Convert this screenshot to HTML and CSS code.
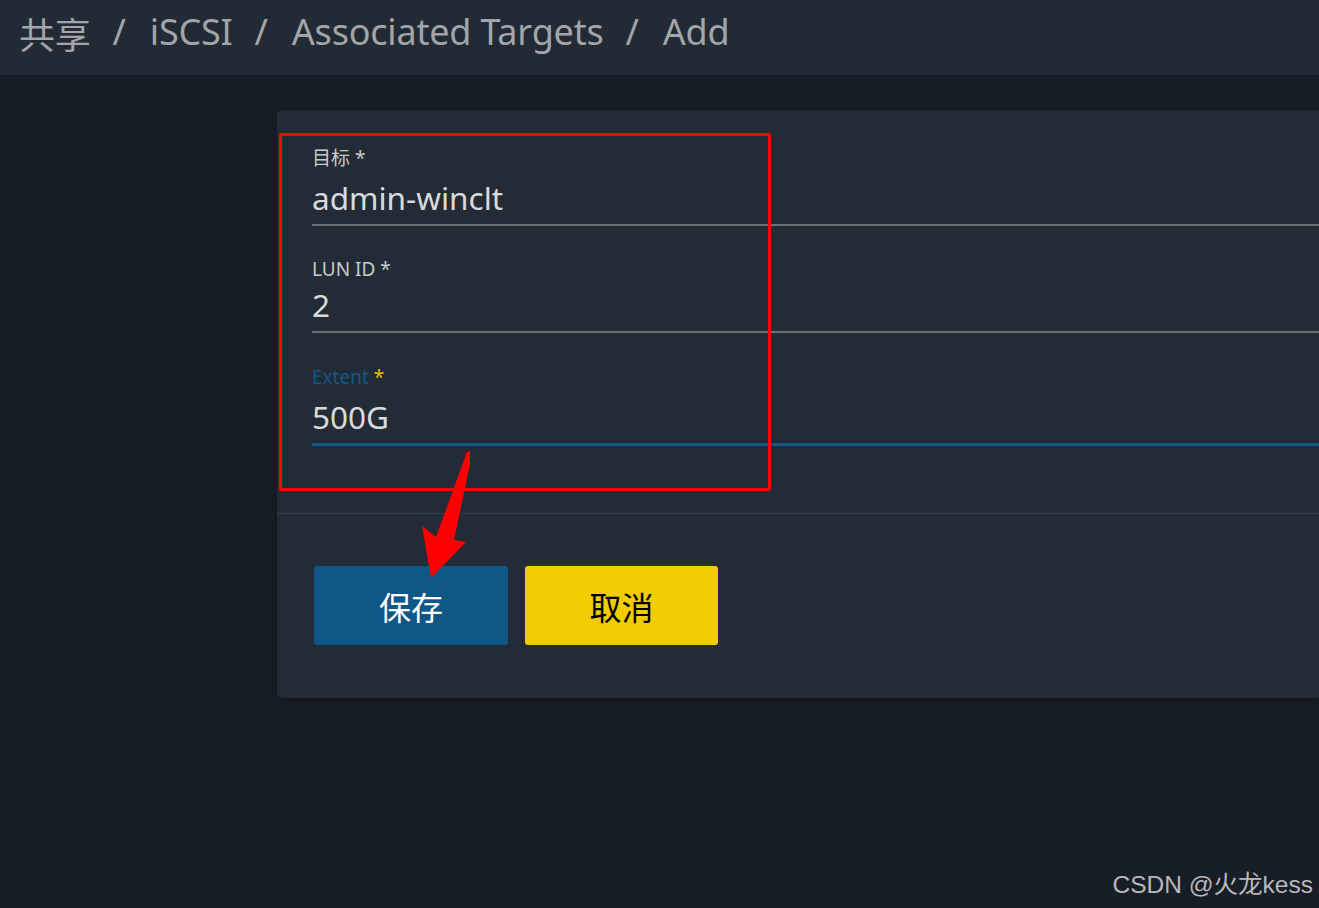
FILE: index.html
```html
<!DOCTYPE html>
<html lang="zh">
<head>
<meta charset="utf-8">
<title>Associated Targets / Add</title>
<link rel="stylesheet" href="styles.css">
</head>
<body>
<header class="topbar">
  <nav class="crumbs">
    <span>共享</span><span class="sep">/</span><span>iSCSI</span><span class="sep">/</span><span>Associated Targets</span><span class="sep">/</span><span>Add</span>
  </nav>
</header>
<main class="main">
  <section class="card">
    <div class="form">
      <div class="field">
        <label class="label">目标 <span class="req">*</span></label>
        <div class="value">admin-winclt</div>
      </div>
      <div class="field second">
        <label class="label">LUN ID <span class="req">*</span></label>
        <div class="value">2</div>
      </div>
      <div class="field focused">
        <label class="label">Extent <span class="req">*</span></label>
        <div class="value">500G</div>
      </div>
    </div>
    <div class="actions">
      <button class="btn save">保存</button>
      <button class="btn cancel">取消</button>
    </div>
  </section>
</main>
<div class="redbox"></div>
<svg class="arrow" width="60" height="140" viewBox="410 445 60 140">
  <polygon points="467,452 473,450 454,540 466,542 431,578 422,526 436,537" fill="#ff0000"/>
</svg>
<div class="watermark">CSDN @火龙kess</div>
</body>
</html>
```
FILE: styles.css
```css
html, body {
  margin: 0;
  padding: 0;
}
body {
  background: #181e27;
  width: 1319px;
  height: 908px;
  overflow: hidden;
  position: relative;
  font-family: "Noto Sans", "Noto Sans CJK SC", sans-serif;
}
.topbar {
  height: 75px;
  background: #222b35;
  display: flex;
  align-items: center;
  padding-left: 19px;
  box-sizing: border-box;
}
.crumbs {
  display: flex;
  color: #a3a5a8;
  font-size: 36px;
  letter-spacing: -0.2px;
  margin-top: -9px;
}
.crumbs .sep {
  padding: 0 24px 0 22px;
}
.main {
  padding: 35px 0 0 277px;
}
.card {
  background: #232c36;
  border-radius: 5px 0 0 5px;
  height: 588px;
  box-shadow: 0 2px 6px rgba(0,0,0,0.35);
  display: flex;
  flex-direction: column;
}
.form {
  padding: 37px 0 0 35px;
  height: 404px;
  border-bottom: 1px solid #343e48;
  box-sizing: border-box;
}
.field {
  border-bottom: 2px solid #6b6f73;
}
.field.second {
  margin-top: 32px;
}
.field.second .value {
  padding-top: 5px;
}
.label {
  display: block;
  color: #c9cbcd;
  font-size: 19px;
  line-height: 22px;
}
.req {
  color: #c9cbcd;
}
.value {
  color: #d9dadb;
  font-size: 31.5px;
  line-height: 40px;
  padding: 9px 0 6px 0;
}
.field.focused {
  margin-top: 33px;
  border-bottom: 3px solid #0f5787;
}
.field.focused .label {
  color: #0f5787;
}
.field.focused .req {
  color: #f0c000;
}
.actions {
  display: flex;
  gap: 17px;
  padding: 52px 0 0 37px;
}
.btn {
  border: none;
  border-radius: 3px;
  height: 79px;
  width: 194px;
  font-size: 32px;
  font-family: "Noto Sans CJK SC", sans-serif;
  cursor: pointer;
}
.btn.save {
  background: #0f5787;
  color: #ffffff;
}
.btn.cancel {
  background: #f0cd00;
  color: #000000;
  width: 193px;
}
.redbox {
  position: absolute;
  left: 279px;
  top: 133px;
  width: 486px;
  height: 352px;
  border: 3px solid #ff0000;
  border-radius: 2px;
  pointer-events: none;
}
.arrow {
  position: absolute;
  left: 410px;
  top: 445px;
}
.watermark {
  position: absolute;
  right: 6px;
  bottom: 8px;
  color: #b8b9bb;
  font-family: "Liberation Sans", "Noto Sans CJK SC", sans-serif;
  font-size: 24.5px;
}
```
